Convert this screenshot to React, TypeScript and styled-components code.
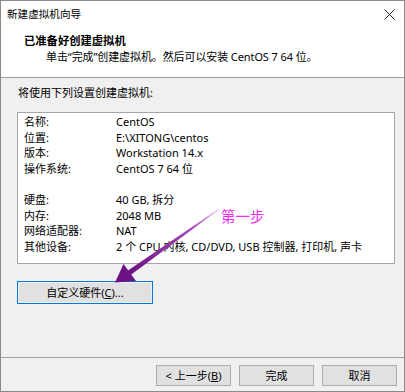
import React from "react";
import styled, { createGlobalStyle } from "styled-components";

const GlobalStyle = createGlobalStyle`
  html, body {
    margin: 0;
    padding: 0;
    background: #ffffff;
  }
  * {
    box-sizing: border-box;
  }
`;

const Window = styled.div`
  position: relative;
  width: 405px;
  height: 392px;
  border: 1px solid #8a8a8a;
  display: flex;
  flex-direction: column;
  background: #f0f0f0;
  font-family: "Noto Sans", "Noto Sans CJK SC", sans-serif;
  font-size: 11px;
  color: #000;
  overflow: hidden;
`;

const TitleBar = styled.div`
  height: 27px;
  background: #fff;
  display: flex;
  align-items: center;
  justify-content: space-between;
  padding: 0 9px 0 6px;
`;

const TitleText = styled.span`
  font-size: 10.6px;
  line-height: 27px;
`;

const CloseIcon = styled.svg`
  width: 11px;
  height: 11px;
  margin-top: -1px;
`;

const Header = styled.div`
  background: #fff;
  border-bottom: 1px solid #a0a0a0;
  padding: 5px 0 12px 23px;
  display: flex;
  flex-direction: column;
`;

const HeaderTitle = styled.div`
  font-weight: 700;
  font-size: 11.3px;
  line-height: 16px;
`;

const HeaderSub = styled.div`
  line-height: 16px;
  padding-left: 22px;
  letter-spacing: -0.1px;
`;

const Body = styled.div`
  flex: 1;
  display: flex;
  flex-direction: column;
  padding: 7px 9px 0 16px;
`;

const Intro = styled.div`
  line-height: 16px;
  padding-left: 1px;
`;

const SummaryBox = styled.div`
  margin-top: 11px;
  height: 152px;
  background: #fff;
  border: 1px solid #a6a6a6;
  padding: 1px 0 0 6px;
  display: grid;
  grid-template-columns: 92px 1fr;
  grid-auto-rows: 15.6px;
  align-items: center;
`;

const Cell = styled.div`
  line-height: 15.6px;
  white-space: nowrap;
`;

const Spacer = styled.div`
  grid-column: 1 / span 2;
`;

const CustomButton = styled.button`
  margin-top: 17px;
  width: 136px;
  height: 23px;
  border: 1px solid #0078d7;
  background: #e1e1e1;
  box-shadow: inset 0 0 0 1px #e5f1fb;
  font: inherit;
  color: #000;
  padding: 0;
  line-height: 20px;
`;

const Footer = styled.div`
  height: 34px;
  border-top: 1px solid #a0a0a0;
  display: flex;
  justify-content: flex-end;
  align-items: flex-start;
  gap: 8px;
  padding: 7px 7px 0 0;
`;

const FooterButton = styled.button`
  width: 75px;
  height: 21px;
  border: 1px solid #adadad;
  background: #e1e1e1;
  font: inherit;
  color: #000;
  padding: 0;
  line-height: 19px;
`;

const Overlay = styled.svg`
  position: absolute;
  left: 0;
  top: 0;
  width: 405px;
  height: 392px;
  pointer-events: none;
`;

const StepLabel = styled.span`
  position: absolute;
  left: 220px;
  top: 205px;
  font-family: "Noto Sans CJK SC", sans-serif;
  font-size: 14.5px;
  line-height: 20px;
  color: #f02cf0;
`;

const rows: [string, string][] = [
  ["名称:", "CentOS"],
  ["位置:", "E:\\XITONG\\centos"],
  ["版本:", "Workstation 14.x"],
  ["操作系统:", "CentOS 7 64 位"],
];

const hardware: [string, string][] = [
  ["硬盘:", "40 GB, 拆分"],
  ["内存:", "2048 MB"],
  ["网络适配器:", "NAT"],
  ["其他设备:", "2 个 CPU 内核, CD/DVD, USB 控制器, 打印机, 声卡"],
];

export default function App() {
  return (
    <>
      <GlobalStyle />
      <Window>
        <TitleBar>
          <TitleText>新建虚拟机向导</TitleText>
          <CloseIcon viewBox="0 0 11 11">
            <path d="M0.5 0.5 L10.5 10.5 M10.5 0.5 L0.5 10.5" stroke="#222" strokeWidth="1" />
          </CloseIcon>
        </TitleBar>
        <Header>
          <HeaderTitle>已准备好创建虚拟机</HeaderTitle>
          <HeaderSub>单击“完成”创建虚拟机。然后可以安装 CentOS 7 64 位。</HeaderSub>
        </Header>
        <Body>
          <Intro>将使用下列设置创建虚拟机:</Intro>
          <SummaryBox>
            {rows.map(([k, v]) => (
              <React.Fragment key={k}>
                <Cell>{k}</Cell>
                <Cell>{v}</Cell>
              </React.Fragment>
            ))}
            <Spacer />
            {hardware.map(([k, v]) => (
              <React.Fragment key={k}>
                <Cell>{k}</Cell>
                <Cell>{v}</Cell>
              </React.Fragment>
            ))}
          </SummaryBox>
          <div>
            <CustomButton>
              自定义硬件(<u>C</u>)...
            </CustomButton>
          </div>
        </Body>
        <Footer>
          <FooterButton>
            &lt; 上一步(<u>B</u>)
          </FooterButton>
          <FooterButton>完成</FooterButton>
          <FooterButton>取消</FooterButton>
        </Footer>
        <Overlay viewBox="0 0 405 392">
          <defs>
            <linearGradient id="shaft" x1="218" y1="208" x2="128" y2="272" gradientUnits="userSpaceOnUse">
              <stop offset="0" stopColor="#ecc4f2" />
              <stop offset="0.3" stopColor="#a34ab8" />
              <stop offset="1" stopColor="#6c1284" />
            </linearGradient>
          </defs>
          <polygon points="218.3,208.6 217.7,207.8 126.6,269.8 129.6,274.0" fill="url(#shaft)" />
          <polygon points="114,281.5 122.5,263 135,280" fill="#6c1284" />
        </Overlay>
        <StepLabel>第一步</StepLabel>
      </Window>
    </>
  );
}
